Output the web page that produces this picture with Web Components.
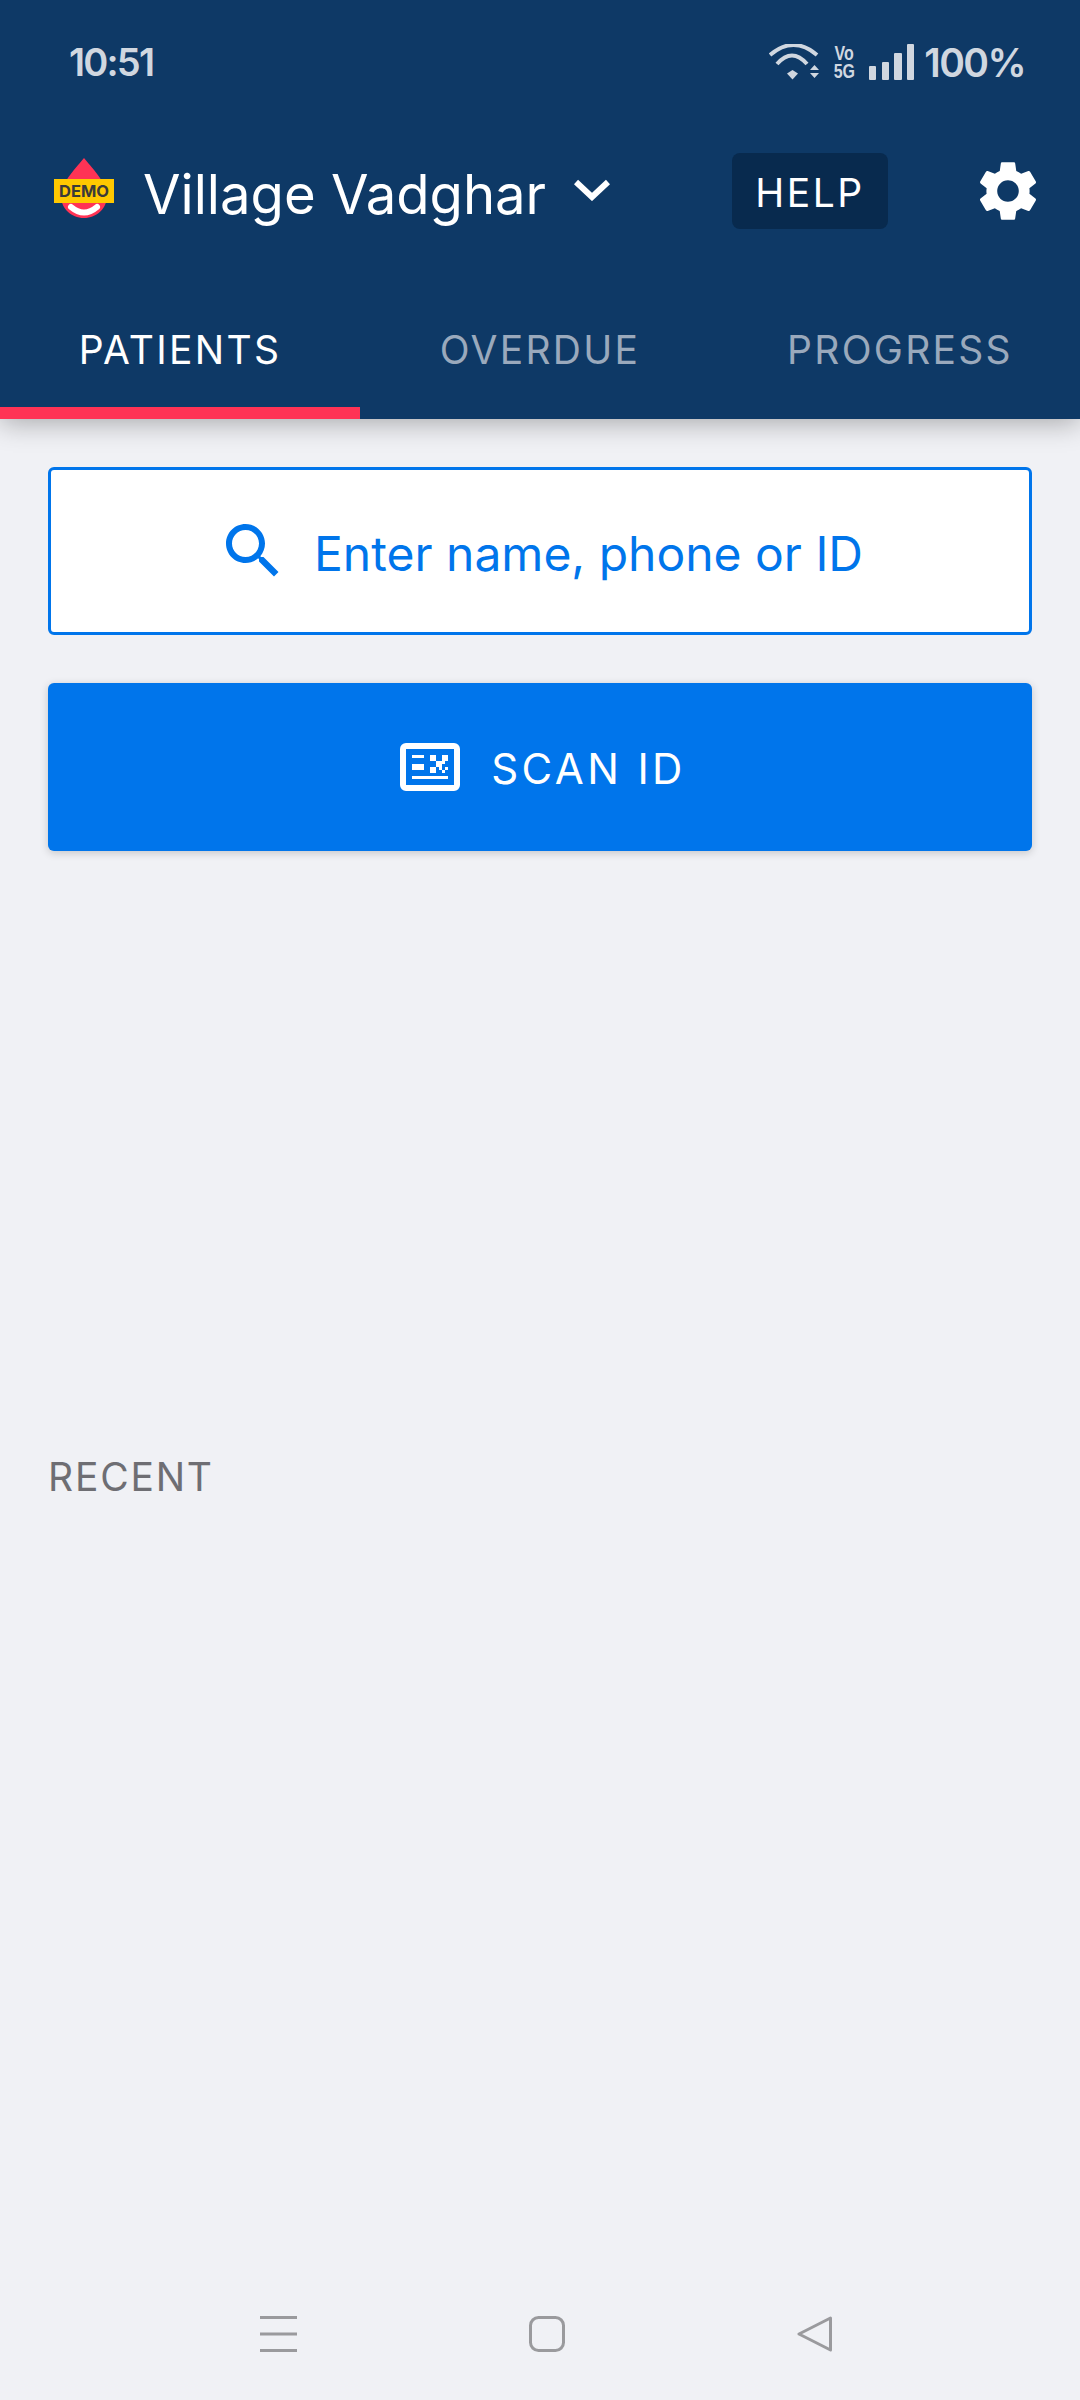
<!DOCTYPE html>
<html>
<head>
<meta charset="utf-8">
<title>Village Vadghar</title>
<style>
html, body { margin: 0; height: 100%; }
body {
  display: flex;
  flex-direction: column;
  height: 2400px;
  background: #f0f1f5;
  font-family: Inter, "Noto Sans", sans-serif;
}
</style>
</head>
<body>
<app-header place="Village Vadghar">
  <tab-item slot="tabs" active>PATIENTS</tab-item>
  <tab-item slot="tabs">OVERDUE</tab-item>
  <tab-item slot="tabs">PROGRESS</tab-item>
</app-header>
<search-box>Enter name, phone or ID</search-box>
<scan-button>SCAN ID</scan-button>
<section-label>RECENT</section-label>
<nav-bar></nav-bar>

<script>
function define(name, markup) {
  var template = document.createElement("template");
  template.innerHTML = markup;
  customElements.define(name, class extends HTMLElement {
    constructor() {
      super();
      this.attachShadow({mode: "open"}).appendChild(template.content.cloneNode(true));
    }
    connectedCallback() {
      var title = this.shadowRoot.querySelector(".title");
      if ( title )
        title.textContent = this.getAttribute("place");
    }
  });
}

define("status-bar", `
<style>
:host {
  display: flex;
  align-items: center;
  height: 124px;
  padding: 0 55px 0 69px;
  color: #d0d7e0;
  font-size: 38px;
  font-weight: 600;
  letter-spacing: -1.8px;
}
.icons {
  display: flex;
  align-items: center;
  margin-left: auto;
}
.net {
  display: flex;
  flex-direction: column;
  align-items: center;
  width: 20px;
  margin: 0 15px;
  font: bold 20px/18px "Liberation Sans", sans-serif;
  letter-spacing: 0;
}
.net span { display: block; transform: scaleX(.8); }
svg { display: block; }
.batt { margin-left: 10px; letter-spacing: -1.6px; font-size: 39px; }
</style>
<span>10:51</span>
<div class="icons">
  <svg width="50" height="36" viewBox="0 0 50 36" fill="none" stroke="#d0d7e0" stroke-width="4">
    <path d="M1 11 Q24.5 -9 48 11"/>
    <path d="M8 20 Q23 3 38 20"/>
    <path d="M18 29.5 L23.5 26 L29 29.5 L23.5 35.5 Z" fill="#d0d7e0" stroke="none"/>
    <path d="M41 26 L45.5 21 L50 26 Z M41 29 L50 29 L45.5 34 Z" fill="#d0d7e0" stroke="none"/>
  </svg>
  <div class="net"><span>Vo</span><span>5G</span></div>
  <svg width="45" height="36" viewBox="0 0 45 36" fill="#d0d7e0">
    <rect x="0" y="22" width="7" height="14" rx="1"/>
    <rect x="13" y="18" width="7" height="18" rx="1"/>
    <rect x="25" y="9" width="8" height="27" rx="1"/>
    <rect x="38" y="0" width="7" height="36" rx="1"/>
  </svg>
  <span class="batt">100%</span>
</div>
`);

define("app-header", `
<style>
:host {
  display: block;
  flex: none;
  background: #0e3966;
  color: #fff;
  box-shadow: 0 4px 26px rgba(0, 0, 0, .3);
  position: relative;
}
.bar {
  display: flex;
  align-items: center;
  height: 134px;
  padding: 0 36px 0 54px;
}
.logo { position: relative; width: 60px; height: 60px; flex: none; margin-top: -6px; }
.logo svg { display: block; }
.demo {
  position: absolute;
  left: 0;
  top: 21px;
  width: 60px;
  height: 24px;
  background: #ffc800;
  color: #3a3a3a;
  font-size: 16.5px;
  font-weight: 700;
  line-height: 24px;
  text-align: center;
}
.title {
  margin-left: 29px;
  padding-top: 5px;
  font-size: 54.4px;
  white-space: nowrap;
}
.chevron { margin-left: 28px; display: block; margin-top: -2px; }
.help {
  margin-left: auto;
  width: 156px;
  height: 76px;
  border-radius: 8px;
  background: #082a4e;
  font-size: 39px;
  line-height: 80px;
  text-align: center;
  letter-spacing: 2.5px;
}
.gear { margin-left: 84px; display: block; }
.tabs {
  display: flex;
  margin-top: 21px;
}
::slotted(tab-item) { flex: 1; }
</style>
<status-bar></status-bar>
<div class="bar">
  <div class="logo">
    <svg width="60" height="60" viewBox="0 0 60 60">
      <path d="M30 0 C36 8 53 24 53 38 C53 50 43 60 30 60 C17 60 7 50 7 38 C7 24 24 8 30 0 Z" fill="#ff3355"/>
      <path d="M17 49 Q30 60 43 49" fill="none" stroke="#fff" stroke-width="6" stroke-linecap="round"/>
    </svg>
    <span class="demo">DEMO</span>
  </div>
  <span class="title"></span>
  <svg class="chevron" width="36" height="22" viewBox="0 0 36 22" fill="none" stroke="#fff" stroke-width="6">
    <path d="M2 3 L18 18 L34 3"/>
  </svg>
  <span class="help">HELP</span>
  <svg class="gear" width="72" height="72" viewBox="0 0 24 24" fill="#fff">
    <path d="M19.14 12.94c.04-.3.06-.61.06-.94 0-.32-.02-.64-.07-.94l2.03-1.58c.18-.14.23-.41.12-.61l-1.92-3.32c-.12-.22-.37-.29-.59-.22l-2.39.96c-.5-.38-1.03-.7-1.62-.94l-.36-2.54c-.04-.24-.24-.41-.48-.41h-3.84c-.24 0-.43.17-.47.41l-.36 2.54c-.59.24-1.13.57-1.62.94l-2.39-.96c-.22-.08-.47 0-.59.22L2.74 8.87c-.12.21-.08.47.12.61l2.03 1.58c-.05.3-.09.63-.09.94s.02.64.07.94l-2.03 1.58c-.18.14-.23.41-.12.61l1.92 3.32c.12.22.37.29.59.22l2.39-.96c.5.38 1.03.7 1.62.94l.36 2.54c.05.24.24.41.48.41h3.84c.24 0 .44-.17.47-.41l.36-2.54c.59-.24 1.13-.56 1.62-.94l2.39.96c.22.08.47 0 .59-.22l1.92-3.32c.12-.22.07-.47-.12-.61l-2.01-1.58zM12 15.6c-1.98 0-3.6-1.62-3.6-3.6s1.62-3.6 3.6-3.6 3.6 1.62 3.6 3.6-1.62 3.6-3.6 3.6z"/>
  </svg>
</div>
<div class="tabs"><slot name="tabs"></slot></div>
`);

define("tab-item", `
<style>
:host {
  display: flex;
  align-items: center;
  justify-content: center;
  position: relative;
  height: 140px;
  color: #9aa9bc;
  font-size: 39px;
  letter-spacing: 2.3px;
}
:host([active]) { color: #fff; }
:host([active])::after {
  content: "";
  position: absolute;
  left: 0;
  right: 0;
  bottom: 0;
  height: 12px;
  background: #ff3355;
}
</style>
<slot></slot>
`);

define("search-box", `
<style>
:host {
  display: flex;
  align-items: center;
  justify-content: center;
  flex: none;
  box-sizing: border-box;
  height: 168px;
  margin: 48px 48px 0;
  border: 3px solid #0075eb;
  border-radius: 6px;
  background: #fff;
  color: #0075eb;
  font-size: 48px;
}
svg { display: block; margin-right: 25px; }
.text { padding-top: 4px; }
</style>
<svg width="72" height="72" viewBox="0 0 24 24" fill="#0075eb">
  <path d="M15.5 14h-.79l-.28-.27C15.41 12.59 16 11.11 16 9.5 16 5.91 13.09 3 9.5 3S3 5.91 3 9.5 5.91 16 9.5 16c1.61 0 3.09-.59 4.23-1.57l.27.28v.79l5 4.99L20.49 19l-4.99-5zm-6 0C7.01 14 5 11.99 5 9.5S7.01 5 9.5 5 14 7.01 14 9.5 11.99 14 9.5 14z"/>
</svg>
<span class="text"><slot></slot></span>
`);

define("scan-button", `
<style>
:host {
  display: flex;
  align-items: center;
  justify-content: center;
  flex: none;
  height: 168px;
  margin: 48px 48px 0;
  padding-left: 6px;
  border-radius: 6px;
  background: #0075eb;
  color: #fff;
  font-size: 42px;
  letter-spacing: 3.4px;
  box-shadow: 0 2px 8px rgba(0, 0, 0, .18);
}
svg { display: block; margin-right: 31px; }
.text { padding-top: 3px; }
</style>
<svg width="60" height="48" viewBox="0 0 60 48" fill="#fff">
  <rect x="3" y="3" width="54" height="42" rx="3" fill="none" stroke="#fff" stroke-width="6"/>
  <rect x="12" y="12" width="12" height="3"/>
  <rect x="12" y="21" width="12" height="6"/>
  <rect x="30" y="12" width="6" height="6"/>
  <rect x="42" y="12" width="6" height="6"/>
  <rect x="36" y="18" width="6" height="6"/>
  <rect x="42" y="18" width="3" height="3"/>
  <rect x="30" y="24" width="6" height="6"/>
  <rect x="39" y="24" width="3" height="3"/>
  <rect x="45" y="24" width="3" height="3"/>
  <rect x="42" y="27" width="3" height="3"/>
  <rect x="12" y="33" width="36" height="3"/>
</svg>
<span class="text"><slot></slot></span>
`);

define("section-label", `
<style>
:host {
  display: block;
  flex: none;
  margin: 603px 48px 0;
  color: #6e6e73;
  font-size: 39px;
  line-height: 46px;
  letter-spacing: 1.8px;
}
</style>
<slot></slot>
`);

define("nav-bar", `
<style>
:host {
  display: flex;
  align-items: center;
  flex: none;
  gap: 232px;
  margin-top: auto;
  padding: 0 0 48px 260px;
}
svg { display: block; }
</style>
<svg width="37" height="36" viewBox="0 0 37 36" fill="#9a9a9d">
  <rect y="0" width="37" height="3"/>
  <rect y="16.5" width="37" height="3"/>
  <rect y="33" width="37" height="3"/>
</svg>
<svg width="36" height="36" viewBox="0 0 36 36" fill="none" stroke="#9a9a9d" stroke-width="3">
  <rect x="1.5" y="1.5" width="33" height="33" rx="8"/>
</svg>
<svg width="36" height="36" viewBox="0 0 36 36" fill="none" stroke="#9a9a9d" stroke-width="3" stroke-linejoin="round">
  <path d="M33.5 2 L2 18 L33.5 34 Z"/>
</svg>
`);
</script>
</body>
</html>
